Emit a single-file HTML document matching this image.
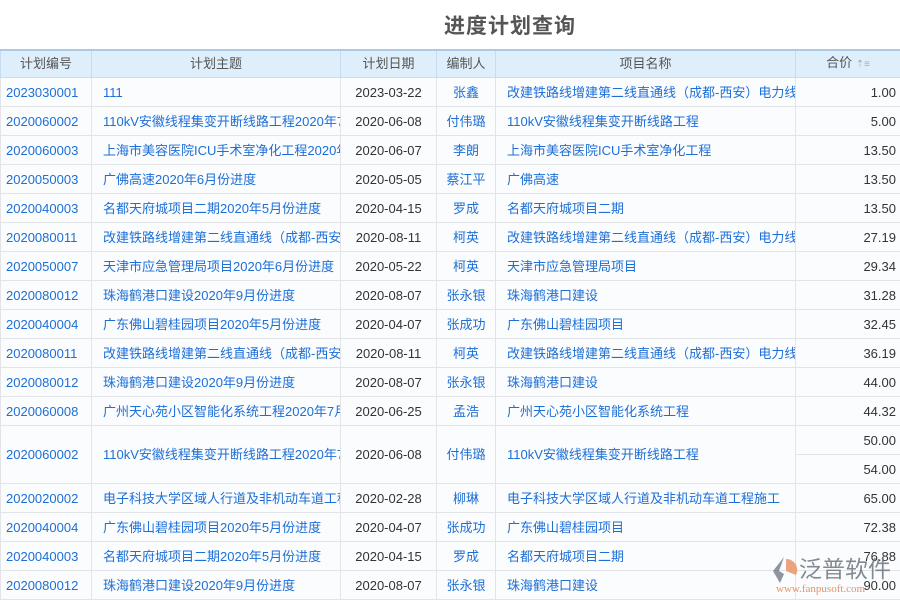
<!DOCTYPE html>
<html><head><meta charset="utf-8"><style>
*{margin:0;padding:0;box-sizing:border-box}
body{width:900px;height:600px;overflow:hidden;background:#fff;font-family:"Liberation Sans","Noto Sans CJK SC",sans-serif;font-size:13px;position:relative}
h1{position:absolute;left:0;width:1020px;top:10px;text-align:center;font-size:21px;font-weight:bold;color:#555;letter-spacing:1px}
table{position:absolute;left:0;top:49px;border-collapse:collapse;table-layout:fixed;width:900px}
td,th{border:1px solid #e2e4e8;height:29px;line-height:27px;white-space:nowrap;overflow:hidden;padding:0 6px;font-weight:normal}
th{background:#dfeefb;color:#555;border-color:#c6dcf0;border-top:2px solid #a9cbe8;height:27px;line-height:24px;text-align:center}
td{color:#1d6fd6;background:#fbfcfe}
td:first-child{padding-left:5px}
td.d{color:#333;text-align:center}
td.n{text-align:center}
td.p{color:#333;text-align:right;padding-right:4px}
td.t{padding-left:11px}
td.m{padding-left:11px}
.logo{position:absolute;left:770px;top:552px;width:130px;height:48px;white-space:nowrap}
</style></head><body>
<h1>进度计划查询</h1>
<table>
<colgroup><col style="width:91px"><col style="width:249px"><col style="width:96px"><col style="width:59px"><col style="width:300px"><col style="width:105px"></colgroup>
<tr><th>计划编号</th><th>计划主题</th><th>计划日期</th><th>编制人</th><th>项目名称</th><th>合价 <span style="color:#aab;font-size:10px">⇡≡</span></th></tr>
<tr><td>2023030001</td><td class="t">111</td><td class="d">2023-03-22</td><td class="n">张鑫</td><td class="m">改建铁路线增建第二线直通线（成都-西安）电力线</td><td class="p">1.00</td></tr>
<tr><td>2020060002</td><td class="t">110kV安徽线程集变开断线路工程2020年7月</td><td class="d">2020-06-08</td><td class="n">付伟璐</td><td class="m">110kV安徽线程集变开断线路工程</td><td class="p">5.00</td></tr>
<tr><td>2020060003</td><td class="t">上海市美容医院ICU手术室净化工程2020年</td><td class="d">2020-06-07</td><td class="n">李朗</td><td class="m">上海市美容医院ICU手术室净化工程</td><td class="p">13.50</td></tr>
<tr><td>2020050003</td><td class="t">广佛高速2020年6月份进度</td><td class="d">2020-05-05</td><td class="n">蔡江平</td><td class="m">广佛高速</td><td class="p">13.50</td></tr>
<tr><td>2020040003</td><td class="t">名都天府城项目二期2020年5月份进度</td><td class="d">2020-04-15</td><td class="n">罗成</td><td class="m">名都天府城项目二期</td><td class="p">13.50</td></tr>
<tr><td>2020080011</td><td class="t">改建铁路线增建第二线直通线（成都-西安）</td><td class="d">2020-08-11</td><td class="n">柯英</td><td class="m">改建铁路线增建第二线直通线（成都-西安）电力线</td><td class="p">27.19</td></tr>
<tr><td>2020050007</td><td class="t">天津市应急管理局项目2020年6月份进度</td><td class="d">2020-05-22</td><td class="n">柯英</td><td class="m">天津市应急管理局项目</td><td class="p">29.34</td></tr>
<tr><td>2020080012</td><td class="t">珠海鹤港口建设2020年9月份进度</td><td class="d">2020-08-07</td><td class="n">张永银</td><td class="m">珠海鹤港口建设</td><td class="p">31.28</td></tr>
<tr><td>2020040004</td><td class="t">广东佛山碧桂园项目2020年5月份进度</td><td class="d">2020-04-07</td><td class="n">张成功</td><td class="m">广东佛山碧桂园项目</td><td class="p">32.45</td></tr>
<tr><td>2020080011</td><td class="t">改建铁路线增建第二线直通线（成都-西安）</td><td class="d">2020-08-11</td><td class="n">柯英</td><td class="m">改建铁路线增建第二线直通线（成都-西安）电力线</td><td class="p">36.19</td></tr>
<tr><td>2020080012</td><td class="t">珠海鹤港口建设2020年9月份进度</td><td class="d">2020-08-07</td><td class="n">张永银</td><td class="m">珠海鹤港口建设</td><td class="p">44.00</td></tr>
<tr><td>2020060008</td><td class="t">广州天心苑小区智能化系统工程2020年7月</td><td class="d">2020-06-25</td><td class="n">孟浩</td><td class="m">广州天心苑小区智能化系统工程</td><td class="p">44.32</td></tr>
<tr><td rowspan="2">2020060002</td><td rowspan="2" class="t">110kV安徽线程集变开断线路工程2020年7月</td><td rowspan="2" class="d">2020-06-08</td><td rowspan="2" class="n">付伟璐</td><td rowspan="2" class="m">110kV安徽线程集变开断线路工程</td><td class="p">50.00</td></tr>
<tr><td class="p">54.00</td></tr>
<tr><td>2020020002</td><td class="t">电子科技大学区域人行道及非机动车道工程</td><td class="d">2020-02-28</td><td class="n">柳琳</td><td class="m">电子科技大学区域人行道及非机动车道工程施工</td><td class="p">65.00</td></tr>
<tr><td>2020040004</td><td class="t">广东佛山碧桂园项目2020年5月份进度</td><td class="d">2020-04-07</td><td class="n">张成功</td><td class="m">广东佛山碧桂园项目</td><td class="p">72.38</td></tr>
<tr><td>2020040003</td><td class="t">名都天府城项目二期2020年5月份进度</td><td class="d">2020-04-15</td><td class="n">罗成</td><td class="m">名都天府城项目二期</td><td class="p">76.88</td></tr>
<tr><td>2020080012</td><td class="t">珠海鹤港口建设2020年9月份进度</td><td class="d">2020-08-07</td><td class="n">张永银</td><td class="m">珠海鹤港口建设</td><td class="p">90.00</td></tr>
</table>
<div class="logo">
<svg width="30" height="34" viewBox="0 0 30 34" style="position:absolute;left:0;top:2px"><path d="M14 3 L3 17 L10 29 L14 20 L9 17 Z" fill="#7a8290" opacity=".85"/><path d="M16 5 A11 11 0 0 1 26 21 L16 17 Z" fill="#e89a70" opacity=".9"/></svg>
<div style="position:absolute;left:29px;top:1px;font-size:23px;line-height:32px;color:#6f7680;opacity:.85">泛普软件</div>
<div style="position:absolute;left:6px;top:31px;font-size:11px;color:#e08050;font-family:'Liberation Serif',serif;opacity:.85">www.fanpusoft.com</div>
</div>
</body></html>
